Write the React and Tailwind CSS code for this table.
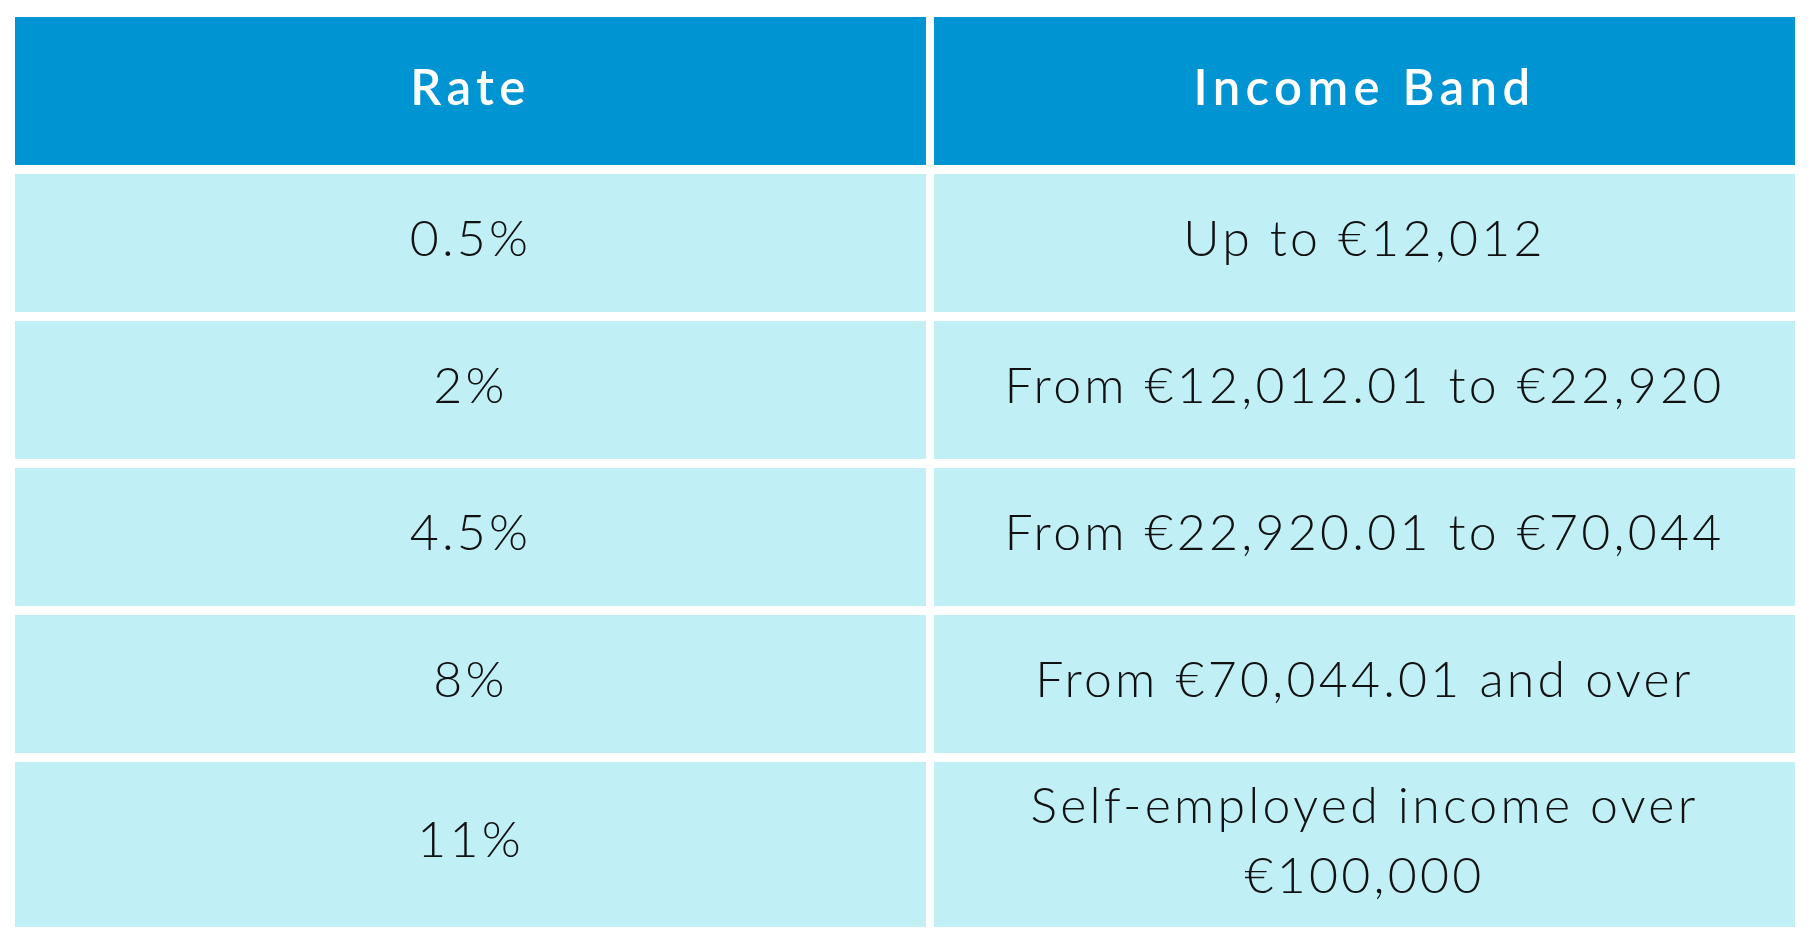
import React from 'react';

const rows = [
  ['0.5%', 'Up to €12,012'],
  ['2%', 'From €12,012.01 to €22,920'],
  ['4.5%', 'From €22,920.01 to €70,044'],
  ['8%', 'From €70,044.01 and over'],
  ['11%', 'Self-employed income over €100,000'],
];

function App() {
  return (
    <div className="w-[1812px] h-[941px] bg-white pt-[17px] pl-[15px] font-['Lato','Liberation_Sans',sans-serif]">
      <div className="grid grid-cols-[911px_861px] gap-x-2 gap-y-[9px]">
        <div className="h-[148px] pb-[8px] bg-[#0094d3] flex items-center justify-center text-white text-[49px] font-semibold tracking-[0.11em]">
          Rate
        </div>
        <div className="h-[148px] pb-[8px] bg-[#0094d3] flex items-center justify-center text-white text-[49px] font-semibold tracking-[0.11em]">
          Income Band
        </div>
        {rows.map(([rate, band], i) => {
          const h = i === rows.length - 1 ? 'h-[165px]' : 'h-[138px]';
          return (
            <React.Fragment key={rate}>
              <div className={`${h} pb-[12px] bg-[#c1eff6] flex items-center justify-center text-[50px] font-light tracking-[0.065em] text-[#111]`}>
                {rate}
              </div>
              <div className={`${h} pb-[12px] bg-[#c1eff6] flex items-center justify-center text-center px-6 text-[50px] leading-[70px] font-light tracking-[0.065em] text-[#111]`}>
                <span className="max-w-[790px]">{band}</span>
              </div>
            </React.Fragment>
          );
        })}
      </div>
    </div>
  );
}

export default App;
